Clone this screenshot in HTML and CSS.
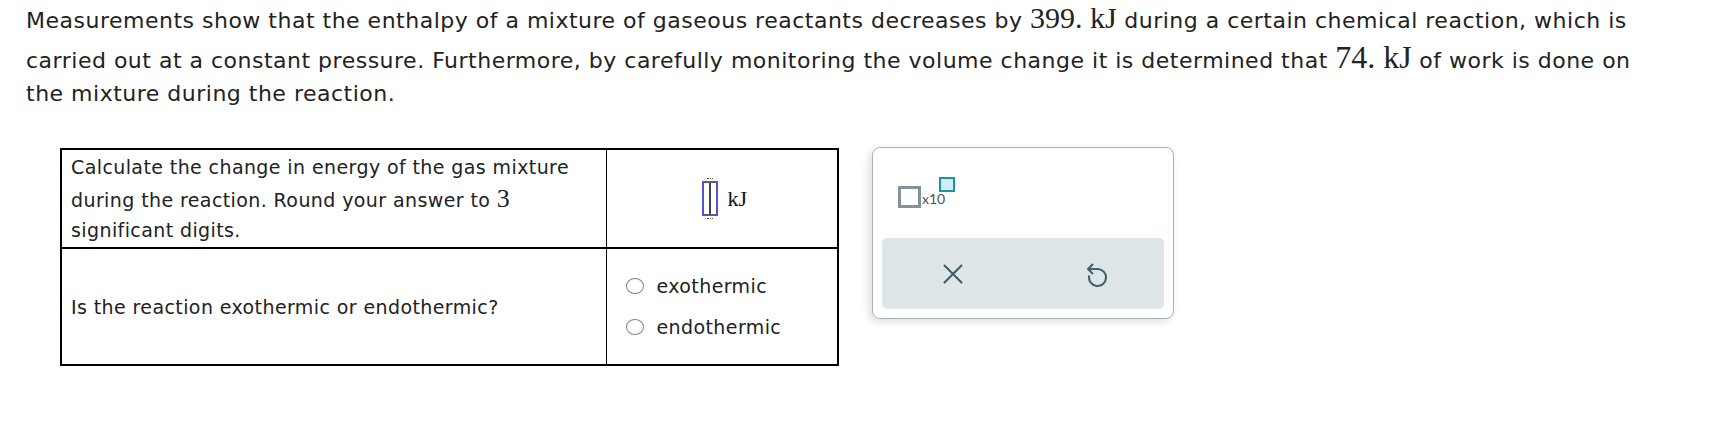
FILE: index.html
```html
<!DOCTYPE html>
<html lang="en">
<head>
<meta charset="utf-8">
<title>Enthalpy question</title>
<link rel="stylesheet" href="styles.css">
</head>
<body>
<main class="page">
  <p class="intro">Measurements show that the enthalpy of a mixture of gaseous reactants decreases by <span class="math m1">399. kJ</span> during a certain chemical reaction, which is carried out at a constant pressure. Furthermore, by carefully monitoring the volume change it is determined that <span class="math m2">74. kJ</span> of work is done on the mixture during the reaction.</p>
  <div class="work">
    <table class="qt">
      <colgroup><col class="c1"><col class="c2"></colgroup>
      <tr class="r1">
        <td class="q">Calculate the change in energy of the gas mixture during the reaction. Round your answer to <span class="math m3">3</span> significant digits.</td>
        <td class="a">
          <div class="ans"><span class="box"><span class="caret"></span></span><span class="math unit">kJ</span></div>
        </td>
      </tr>
      <tr class="r2">
        <td class="q">Is the reaction exothermic or endothermic?</td>
        <td class="a opts">
          <label class="opt"><span class="radio"></span>exothermic</label>
          <label class="opt"><span class="radio"></span>endothermic</label>
        </td>
      </tr>
    </table>
    <div class="panel">
      <div class="sci"><span class="sq"></span><span class="x10">x10</span><span class="sup"></span></div>
      <div class="bar">
        <button class="btn" type="button" aria-label="Clear">
          <svg width="20" height="20" viewBox="0 0 20 20"><path d="M1.5 1.5 L18.5 18.5 M18.5 1.5 L1.5 18.5" stroke="#3d5b66" stroke-width="2" fill="none" stroke-linecap="round"/></svg>
        </button>
        <button class="btn" type="button" aria-label="Undo">
          <svg width="26" height="28" viewBox="0 0 26 28"><path d="M16.5 9 A8.5 8.5 0 1 1 8.1 16.2" stroke="#42616c" stroke-width="2.1" fill="none" stroke-linecap="round"/><path d="M16.5 9 H7 M11.5 4.5 L7 9 L11.5 13.5" stroke="#42616c" stroke-width="2.1" fill="none" stroke-linecap="round" stroke-linejoin="round"/></svg>
        </button>
      </div>
    </div>
  </div>
</main>
</body>
</html>
```

FILE: styles.css
```css
* { box-sizing: border-box; }
html, body { margin: 0; background: #fff; }
body {
  font-family: "DejaVu Sans", Verdana, sans-serif;
  color: #222;
}
.page { padding: 4px 0 0 26px; }

.intro {
  margin: 0;
  max-width: 1645px;
  font-size: 22px;
  letter-spacing: 0.5px;
  line-height: 33px;
}
.math {
  font-family: "Liberation Serif", "Times New Roman", serif;
  letter-spacing: 0;
}
.m1 { font-size: 30px; line-height: 0; }
.m2 { font-size: 32px; display: inline-block; line-height: 40px; }
.m3 { font-size: 26px; display: inline-block; line-height: 33px; }

.work {
  display: flex;
  align-items: flex-start;
  gap: 33px;
  margin: 38px 0 0 34px;
}

.qt {
  border-collapse: collapse;
  table-layout: fixed;
  width: 779px;
  border: 2px solid #000;
  font-size: 19px;
  letter-spacing: 0.4px;
  line-height: 30px;
}
.c1 { width: 545px; }
.qt td {
  border: 2px solid #000;
  padding: 0 9px;
  vertical-align: middle;
}
.qt td.q { border-right-width: 1px; }
.qt td.a { border-left-width: 1px; }
.qt td.opts { padding-left: 19px; }
.r1 td { height: 99px; }
.r2 td { height: 117px; }

.ans {
  display: flex;
  justify-content: center;
  align-items: center;
  gap: 9px;
  padding-left: 6px;
}
.box {
  position: relative;
  width: 16px;
  height: 35px;
  border: 2px solid #5353d6;
  display: flex;
  justify-content: center;
}
.caret { width: 2px; height: 100%; background: #444; }
.box::before, .box::after {
  content: "";
  position: absolute;
  left: 3px;
  width: 6px;
  height: 3px;
  border-top: 1px dotted #555;
  border-bottom: 1px dotted #555;
}
.box::before { top: -5px; }
.box::after { bottom: -5px; }
.unit { font-size: 22px; line-height: 1; letter-spacing: 0; color: #111; }

.opt {
  display: flex;
  align-items: center;
  gap: 13px;
  height: 41px;
}
.radio {
  width: 18px;
  height: 16px;
  border: 1.5px solid #808080;
  border-radius: 50%;
  flex: none;
}

.panel {
  width: 302px;
  height: 172px;
  margin-top: -1px;
  border: 1px solid #a9b1b4;
  border-radius: 8px;
  box-shadow: -3px 3px 8px rgba(0, 0, 0, 0.13);
  padding: 0 9px 9px;
  display: flex;
  flex-direction: column;
  justify-content: space-between;
}
.sci {
  display: flex;
  align-items: flex-end;
  margin: 29px 0 0 16px;
}
.sq {
  width: 23px;
  height: 22px;
  border: 3px solid #84939a;
}
.x10 {
  font-family: Lato, "Open Sans", sans-serif;
  font-size: 14px;
  line-height: 14px;
  color: #3f5561;
  margin: 0 0 2px 1px;
}
.sup {
  width: 16px;
  height: 15px;
  border: 2.5px solid #1793a6;
  background: #d3ecf1;
  margin: 0 0 16px -6px;
}
.bar {
  height: 71px;
  background: #dfe6e8;
  border-radius: 5px;
  display: grid;
  grid-template-columns: 1fr 1fr;
}
.btn {
  border: 0;
  background: transparent;
  padding: 0;
  display: flex;
  align-items: center;
  justify-content: center;
}
.btn svg { display: block; }
```
